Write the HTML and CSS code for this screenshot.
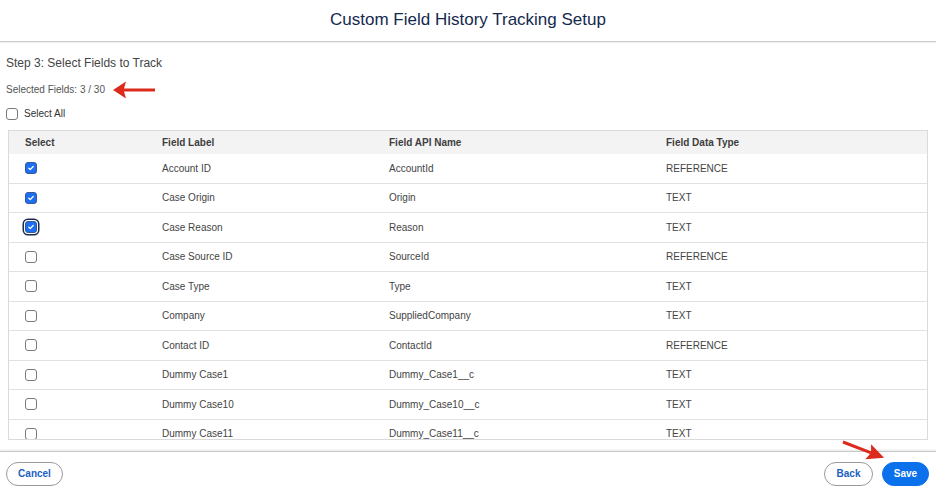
FILE: index.html
```html
<!DOCTYPE html>
<html lang="en">
<head>
<meta charset="utf-8">
<title>Custom Field History Tracking Setup</title>
<link rel="stylesheet" href="styles.css">
</head>
<body>
<header class="header">
  <h1 class="title">Custom Field History Tracking Setup</h1>
</header>

<main class="content">
  <h2 class="step">Step 3: Select Fields to Track</h2>
  <p class="count">Selected Fields: 3 / 30</p>
  <label class="select-all"><span class="cb"></span><span>Select All</span></label>

  <div class="table-wrap">
    <table class="fields">
      <colgroup>
        <col class="c1"><col class="c2"><col class="c3"><col class="c4">
      </colgroup>
      <thead>
        <tr><th>Select</th><th>Field Label</th><th>Field API Name</th><th>Field Data Type</th></tr>
      </thead>
      <tbody>
        <tr><td><span class="cb checked"><svg viewBox="0 0 12 12"><path d="M3.4 6.3 5.1 7.9 8.6 4.2" /></svg></span></td><td>Account ID</td><td>AccountId</td><td>REFERENCE</td></tr>
        <tr><td><span class="cb checked"><svg viewBox="0 0 12 12"><path d="M3.4 6.3 5.1 7.9 8.6 4.2" /></svg></span></td><td>Case Origin</td><td>Origin</td><td>TEXT</td></tr>
        <tr><td><span class="cb checked focused"><svg viewBox="0 0 12 12"><path d="M3.4 6.3 5.1 7.9 8.6 4.2" /></svg></span></td><td>Case Reason</td><td>Reason</td><td>TEXT</td></tr>
        <tr><td><span class="cb"></span></td><td>Case Source ID</td><td>SourceId</td><td>REFERENCE</td></tr>
        <tr><td><span class="cb"></span></td><td>Case Type</td><td>Type</td><td>TEXT</td></tr>
        <tr><td><span class="cb"></span></td><td>Company</td><td>SuppliedCompany</td><td>TEXT</td></tr>
        <tr><td><span class="cb"></span></td><td>Contact ID</td><td>ContactId</td><td>REFERENCE</td></tr>
        <tr><td><span class="cb"></span></td><td>Dummy Case1</td><td>Dummy_Case1__c</td><td>TEXT</td></tr>
        <tr><td><span class="cb"></span></td><td>Dummy Case10</td><td>Dummy_Case10__c</td><td>TEXT</td></tr>
        <tr><td><span class="cb"></span></td><td>Dummy Case11</td><td>Dummy_Case11__c</td><td>TEXT</td></tr>
      </tbody>
    </table>
  </div>
</main>

<footer class="footer">
  <button class="btn btn-cancel">Cancel</button>
  <div class="right">
    <button class="btn btn-back">Back</button>
    <button class="btn btn-save primary">Save</button>
  </div>
</footer>

<svg class="arrow arrow-count" viewBox="0 0 48 20" width="48" height="20">
  <polygon points="3,10 16,1.5 14,8.6 45,8.6 45,11.4 14,11.4 16,18.5" />
</svg>
<svg class="arrow arrow-save" viewBox="0 0 52 28" width="52" height="28">
  <g transform="translate(5,6) rotate(21)">
    <polygon points="44,0 27,-8 29.5,-1.5 0,-1.5 0,1.5 29.5,1.5 27,8" />
  </g>
</svg>
</body>
</html>
```

FILE: styles.css
```css
* { box-sizing: border-box; }

html, body {
  margin: 0;
  padding: 0;
}

body {
  width: 936px;
  height: 490px;
  overflow: hidden;
  display: flex;
  flex-direction: column;
  font-family: "Liberation Sans", Arial, sans-serif;
  color: #444;
  background: #fff;
  position: relative;
}

.header {
  height: 42px;
  border-bottom: 1px solid #cbcbcb;
  box-shadow: 0 1px 1px rgba(0, 0, 0, 0.06);
  display: flex;
  align-items: center;
  justify-content: center;
}

.title {
  margin: 0;
  font-size: 17px;
  font-weight: normal;
  color: #15294f;
  line-height: 20px;
  padding-bottom: 2px;
}

.content {
  display: flex;
  flex-direction: column;
  padding: 0 8px 0 6px;
}

.step {
  margin: 14px 0 0;
  font-size: 12px;
  line-height: 14px;
  font-weight: normal;
  color: #444;
}

.count {
  margin: 14px 0 0;
  font-size: 10px;
  line-height: 12px;
  color: #555;
}

.select-all {
  margin-top: 12px;
  display: flex;
  align-items: center;
  gap: 6px;
  font-size: 10px;
  line-height: 12px;
  color: #333;
}

.cb {
  display: inline-block;
  width: 12px;
  height: 12px;
  border: 1px solid #7a7a7a;
  border-radius: 3px;
  background: #fff;
  flex: none;
  vertical-align: middle;
}

.cb svg {
  display: block;
  width: 10px;
  height: 10px;
  fill: none;
  stroke: #fff;
  stroke-width: 1.6;
  stroke-linecap: round;
  stroke-linejoin: round;
}

.cb.checked {
  background: #1b6ff0;
  border-color: #3a5796;
}

.cb.focused {
  box-shadow: 0 0 0 1px #fff, 0 0 0 2.5px #1c2b4e;
}

.table-wrap {
  margin: 10px 0 0 2px;
  height: 310px;
  border: 1px solid #dadada;
  overflow: hidden;
}

.fields {
  width: 100%;
  table-layout: fixed;
  border-collapse: separate;
  border-spacing: 0;
  font-size: 10px;
}

.c1 { width: 137px; }
.c2 { width: 227px; }
.c3 { width: 277px; }

.fields th {
  height: 23px;
  padding: 0 0 1px 16px;
  text-align: left;
  font-weight: bold;
  color: #3e3e3e;
  background: #f3f3f3;
  vertical-align: middle;
}

.fields td {
  height: 29.5px;
  padding: 0 0 0 16px;
  border-bottom: 1px solid #e2e2e2;
  color: #444;
  vertical-align: middle;
  white-space: nowrap;
}

.footer {
  margin-top: auto;
  height: 39px;
  border-top: 1px solid #c8c8c8;
  box-shadow: 0 -1px 2px rgba(0, 0, 0, 0.1);
  padding: 10px 7px 4px 6px;
  display: flex;
  justify-content: space-between;
  align-items: flex-start;
}

.right {
  display: flex;
  gap: 9px;
}

.btn {
  height: 24px;
  padding: 0;
  border: 1px solid #9a9a9a;
  border-radius: 12px;
  background: #fff;
  color: #1a5fc4;
  font-family: "Liberation Sans", Arial, sans-serif;
  font-size: 10px;
  font-weight: bold;
  line-height: 22px;
  text-align: center;
}

.btn-cancel { width: 57px; }
.btn-back { width: 49px; }
.btn-save { width: 47px; }

.btn.primary {
  background: #0a70eb;
  border-color: #0a70eb;
  color: #fff;
}

.arrow {
  position: absolute;
  fill: #dc2a1c;
}

.arrow-count {
  left: 110px;
  top: 80px;
}

.arrow-save {
  left: 838px;
  top: 436px;
}
```
